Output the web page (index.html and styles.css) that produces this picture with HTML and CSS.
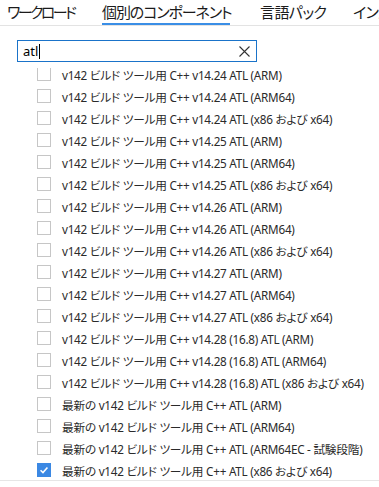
FILE: index.html
```html
<!DOCTYPE html>
<html lang="ja">
<head>
<meta charset="utf-8">
<link rel="stylesheet" href="styles.css">
</head>
<body>
<div class="app">
  <nav class="tabs">
    <div class="tab t1">ワークロード</div>
    <div class="tab t2 active">個別のコンポーネント</div>
    <div class="tab t3">言語パック</div>
    <div class="tab t4">インストール場所</div>
  </nav>
  <div class="search">
    <span class="query">atl</span><span class="caret"></span>
    <svg class="clear" width="11" height="11" viewBox="0 0 11 11"><path d="M0.5 0.5L10.5 10.5M10.5 0.5L0.5 10.5" stroke="#333" stroke-width="1.1" fill="none"/></svg>
  </div>
  <div class="list">
    <div class="rows">
      <label class="row"><span class="box"></span><span class="lbl">v142 ビルド ツール用 C++ v14.24 ATL (ARM)</span></label>
      <label class="row"><span class="box"></span><span class="lbl">v142 ビルド ツール用 C++ v14.24 ATL (ARM64)</span></label>
      <label class="row"><span class="box"></span><span class="lbl">v142 ビルド ツール用 C++ v14.24 ATL (x86 および x64)</span></label>
      <label class="row"><span class="box"></span><span class="lbl">v142 ビルド ツール用 C++ v14.25 ATL (ARM)</span></label>
      <label class="row"><span class="box"></span><span class="lbl">v142 ビルド ツール用 C++ v14.25 ATL (ARM64)</span></label>
      <label class="row"><span class="box"></span><span class="lbl">v142 ビルド ツール用 C++ v14.25 ATL (x86 および x64)</span></label>
      <label class="row"><span class="box"></span><span class="lbl">v142 ビルド ツール用 C++ v14.26 ATL (ARM)</span></label>
      <label class="row"><span class="box"></span><span class="lbl">v142 ビルド ツール用 C++ v14.26 ATL (ARM64)</span></label>
      <label class="row"><span class="box"></span><span class="lbl">v142 ビルド ツール用 C++ v14.26 ATL (x86 および x64)</span></label>
      <label class="row"><span class="box"></span><span class="lbl">v142 ビルド ツール用 C++ v14.27 ATL (ARM)</span></label>
      <label class="row"><span class="box"></span><span class="lbl">v142 ビルド ツール用 C++ v14.27 ATL (ARM64)</span></label>
      <label class="row"><span class="box"></span><span class="lbl">v142 ビルド ツール用 C++ v14.27 ATL (x86 および x64)</span></label>
      <label class="row"><span class="box"></span><span class="lbl">v142 ビルド ツール用 C++ v14.28 (16.8) ATL (ARM)</span></label>
      <label class="row"><span class="box"></span><span class="lbl">v142 ビルド ツール用 C++ v14.28 (16.8) ATL (ARM64)</span></label>
      <label class="row"><span class="box"></span><span class="lbl">v142 ビルド ツール用 C++ v14.28 (16.8) ATL (x86 および x64)</span></label>
      <label class="row"><span class="box"></span><span class="lbl">最新の v142 ビルド ツール用 C++ ATL (ARM)</span></label>
      <label class="row"><span class="box"></span><span class="lbl">最新の v142 ビルド ツール用 C++ ATL (ARM64)</span></label>
      <label class="row"><span class="box"></span><span class="lbl">最新の v142 ビルド ツール用 C++ ATL (ARM64EC - 試験段階)</span></label>
      <label class="row"><span class="box checked"><svg width="14" height="14" viewBox="0 0 14 14"><path d="M3 7.2L5.8 10L11 4" stroke="#fff" stroke-width="1.8" fill="none"/></svg></span><span class="lbl">最新の v142 ビルド ツール用 C++ ATL (x86 および x64)</span></label>
    </div>
  </div>
</div>
</body>
</html>
```

FILE: styles.css
```css
* { box-sizing: border-box; }
html, body { margin: 0; padding: 0; background: #fff; }
body {
  font-family: "Segoe UI", "Noto Sans", "Noto Sans CJK JP", sans-serif;
  color: #1e1e1e;
  width: 379px;
  height: 487px;
  overflow: hidden;
}
.app { width: 379px; }
.tabs {
  display: flex;
  height: 26px;
  border-bottom: 1px solid #e3e3e3;
  padding-left: 7px;
  white-space: nowrap;
  overflow: hidden;
  font-family: "Noto Sans CJK JP", sans-serif;
  font-feature-settings: "palt";
  font-size: 15px;
  line-height: 22px;
}
.tab {
  flex: none;
  height: 25px;
  border-bottom: 2px solid transparent;
  color: #1b1b1b;
  padding-top: 1px;
}
.t1 { width: 66px; letter-spacing: -2.6px; margin-right: 29px; }
.t2 { width: 128px; letter-spacing: -1.1px; margin-right: 30px; }
.t3 { width: 65px; letter-spacing: -0.6px; margin-right: 28px; }
.t4 { letter-spacing: -0.6px; }
.tab.active { border-bottom-color: #3a8ee6; }
.search {
  margin: 14px 0 0 17px;
  width: 240px;
  height: 22px;
  border: 1px solid #1a73c9;
  display: flex;
  align-items: center;
  padding-left: 5px;
  padding-right: 6px;
  font-size: 13px;
}
.query { color: #000; line-height: 16px; }
.caret { width: 1px; height: 15px; background: #000; margin-left: 1px; }
.clear { margin-left: auto; }
.list {
  margin-top: 6px;
  height: 413px;
  overflow: hidden;
  border-bottom: 1px solid #e6e6e6;
}
.rows { margin-top: -5px; display: flex; flex-direction: column; }
.row {
  height: 22px;
  display: flex;
  align-items: center;
  padding-left: 37px;
  font-size: 11.7px;
  letter-spacing: -0.25px;
  font-feature-settings: "palt";
  white-space: nowrap;
}
.box {
  width: 14px;
  height: 14px;
  border: 1px solid #c6c6c6;
  flex: none;
  margin-right: 11px;
  display: flex;
  align-items: center;
  justify-content: center;
}
.box.checked { background: #3b88e3; border-color: #3b88e3; }
.box svg { display: block; }
.lbl { color: #2a2a2a; }
```
